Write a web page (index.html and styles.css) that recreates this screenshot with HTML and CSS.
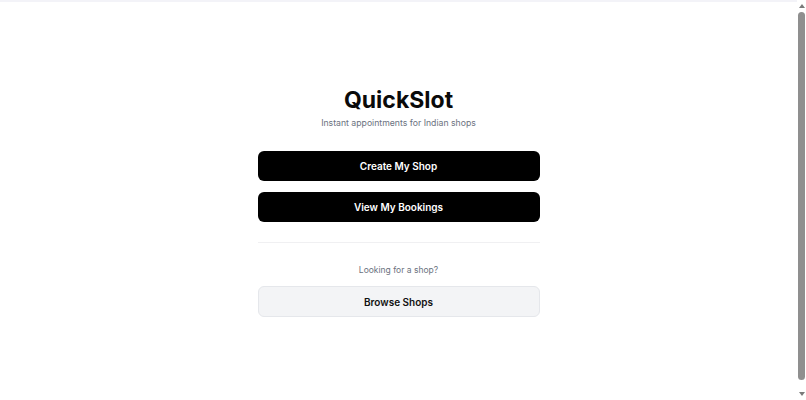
FILE: index.html
```html
<!DOCTYPE html>
<html lang="en">
<head>
    <meta charset="UTF-8">
    <meta name="viewport" content="width=device-width, initial-scale=1.0">
    <title>QuickSlot</title>
    <link rel="stylesheet" href="styles.css">
</head>
<body>

<div class="topbar"></div>

<main class="page">
    <div class="card">
        <h1 class="title">QuickSlot</h1>
        <p class="subtitle">Instant appointments for Indian shops</p>

        <div class="actions">
            <button class="btn btn-dark">Create My Shop</button>
            <button class="btn btn-dark">View My Bookings</button>
        </div>

        <hr class="divider">

        <p class="hint">Looking for a shop?</p>
        <button class="btn btn-light">Browse Shops</button>
    </div>
</main>

<!-- fake window scrollbar -->
<div class="scrollbar">
    <span class="arrow arrow-up"></span>
    <span class="thumb"></span>
    <span class="arrow arrow-down"></span>
</div>

</body>
</html>
```

FILE: styles.css
```css
body {
    font-family: Inter, "Noto Sans", sans-serif;
    background-color: #ffffff;
    color: #0a0a0a;
    margin: 0;
    padding: 0;
}

.topbar {
    height: 2px;
    background-color: #f3f3f8;
}

.page {
    min-height: 105vh;
    display: flex;
    justify-content: center;
    padding-top: 84px;
    padding-right: 9px;
    box-sizing: border-box;
}

.card {
    width: 282px;
    text-align: center;
}

.title {
    font-size: 23px;
    font-weight: 700;
    margin: 0;
    line-height: 28px;
}

.subtitle {
    font-size: 8.7px;
    line-height: 14px;
    color: #6b7280;
    margin: 2px 0 0;
}

.actions {
    display: flex;
    flex-direction: column;
    gap: 11px;
    margin-top: 21px;
}

.btn {
    display: block;
    width: 100%;
    height: 30px;
    border-radius: 6px;
    font-family: inherit;
    font-size: 10px;
    font-weight: 600;
    cursor: pointer;
}

.btn-dark {
    background-color: #000000;
    color: #ffffff;
    border: none;
}

.btn-light {
    height: 31px;
    background-color: #f3f4f6;
    color: #111111;
    border: 1px solid #e5e7eb;
}

.divider {
    border: none;
    border-top: 1px solid #f0f0f2;
    margin: 20px 0 0;
}

.hint {
    font-size: 8.5px;
    line-height: 12px;
    color: #6b7280;
    margin: 21px 0 10px;
}

.scrollbar {
    position: fixed;
    top: 0;
    right: 0;
    width: 9px;
    height: 100vh;
    background-color: #ffffff;
    display: flex;
    flex-direction: column;
    align-items: center;
}

.thumb {
    flex: 1;
    width: 7px;
    margin: 4px 0 12px;
    border-radius: 4px;
    background-color: #8f8f8f;
}

.arrow {
    width: 0;
    height: 0;
    border-left: 3px solid transparent;
    border-right: 3px solid transparent;
}

.arrow-up {
    margin-top: 4px;
    border-bottom: 4px solid #7a7a7a;
}

.arrow-down {
    margin-bottom: 4px;
    border-top: 4px solid #7a7a7a;
}
```
